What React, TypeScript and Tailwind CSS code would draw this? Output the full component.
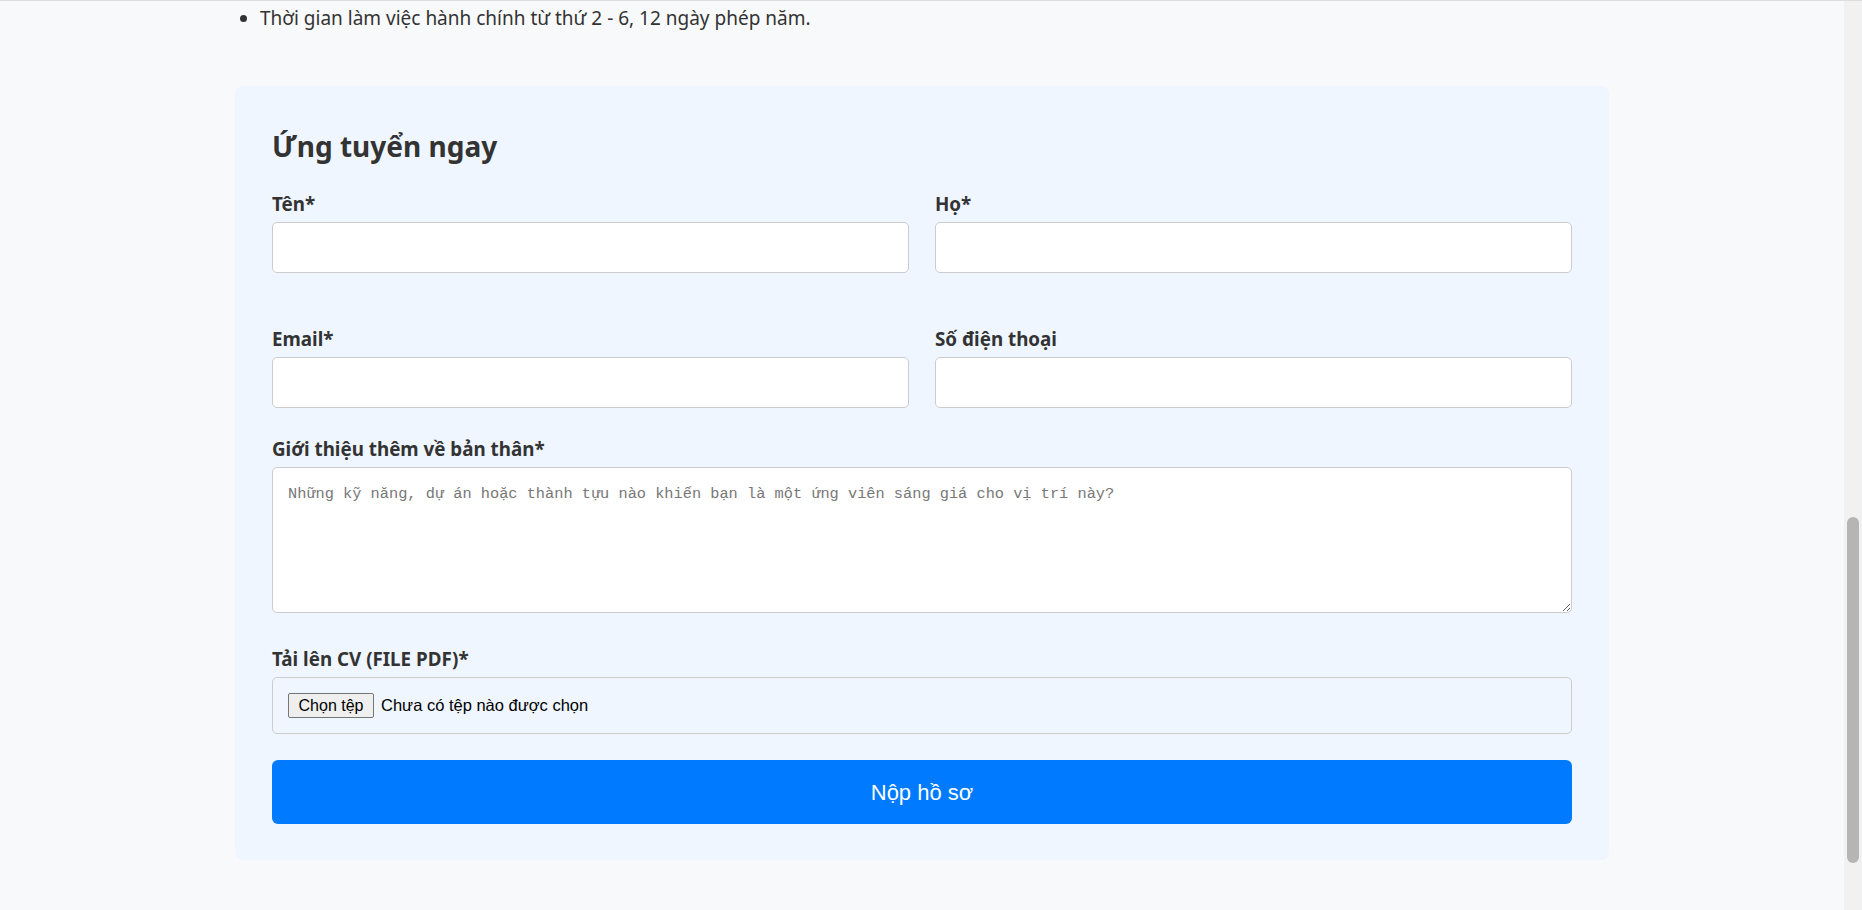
import React from "react";

const sans = "font-['Noto_Sans','Open_Sans',sans-serif]";

function Label({ children }: { children: React.ReactNode }) {
  return (
    <label className="mb-[6px] block text-[18.8px] font-bold leading-[24px] text-[#333333]">
      {children}
    </label>
  );
}

function TextInput() {
  return (
    <input
      type="text"
      className="block h-[51px] w-full rounded-[5px] border border-[#cccccc] bg-white px-[15px] text-[16px] outline-none"
    />
  );
}

export default function App() {
  return (
    <div className={`flex h-[910px] w-full overflow-hidden border-t border-[#dddddd] bg-[#f8f9fa] ${sans}`}>
      <main className="min-w-0 flex-1">
        <div className="mx-auto w-[1374px]">
          <ul className="list-disc pl-[25px] pt-[4px] text-[19px] leading-[27px] text-[#333333]">
            <li>Thời gian làm việc hành chính từ thứ 2 - 6, 12 ngày phép năm.</li>
          </ul>

          <section className="mt-[54px] rounded-[8px] bg-[#eff6ff] px-[37px] pb-[36px] pt-[43px]">
            <h2 className="mb-[29px] text-[28px] font-bold leading-[34px] text-[#333333]">
              Ứng tuyển ngay
            </h2>

            <div className="grid grid-cols-2 gap-x-[26px]">
              <div className="mb-[54px]">
                <Label>Tên*</Label>
                <TextInput />
              </div>
              <div className="mb-[54px]">
                <Label>Họ*</Label>
                <TextInput />
              </div>
              <div className="mb-[29px]">
                <Label>Email*</Label>
                <TextInput />
              </div>
              <div className="mb-[29px]">
                <Label>Số điện thoại</Label>
                <TextInput />
              </div>
            </div>

            <div className="mb-[34px]">
              <Label>Giới thiệu thêm về bản thân*</Label>
              <textarea
                className="block h-[146px] w-full resize-y rounded-[5px] border border-[#cccccc] bg-white px-[15px] pb-[15px] pt-[18px] font-['Liberation_Mono','DejaVu_Sans_Mono',monospace] text-[15.3px] leading-[17px] text-[#333333] outline-none placeholder:text-[#777777]"
                placeholder="Những kỹ năng, dự án hoặc thành tựu nào khiến bạn là một ứng viên sáng giá cho vị trí này?"
              />
            </div>

            <div className="mb-[26px]">
              <Label>Tải lên CV (FILE PDF)*</Label>
              <div className="flex h-[57px] items-center rounded-[5px] border border-[#cccccc] px-[15px] font-['Liberation_Sans',Arial,sans-serif] text-[16px] text-black">
                <span className="flex h-[25px] w-[86px] items-center justify-center rounded-[2px] border border-[#767676] bg-[#efefef] leading-none">
                  Chọn tệp
                </span>
                <span className="ml-[7px] text-[16.5px]">Chưa có tệp nào được chọn</span>
              </div>
            </div>

            <button
              type="button"
              className="flex h-[64px] w-full items-center justify-center rounded-[6px] bg-[#007bff] font-['Liberation_Sans',Arial,sans-serif] text-[22px] text-white"
            >
              Nộp hồ sơ
            </button>
          </section>
        </div>
      </main>

      <div className="flex w-[18px] flex-col bg-[#f1f1f1] pt-[516px]">
        <div className="mx-auto h-[346px] w-[12px] rounded-full bg-[#b5b5b5]" />
      </div>
    </div>
  );
}
